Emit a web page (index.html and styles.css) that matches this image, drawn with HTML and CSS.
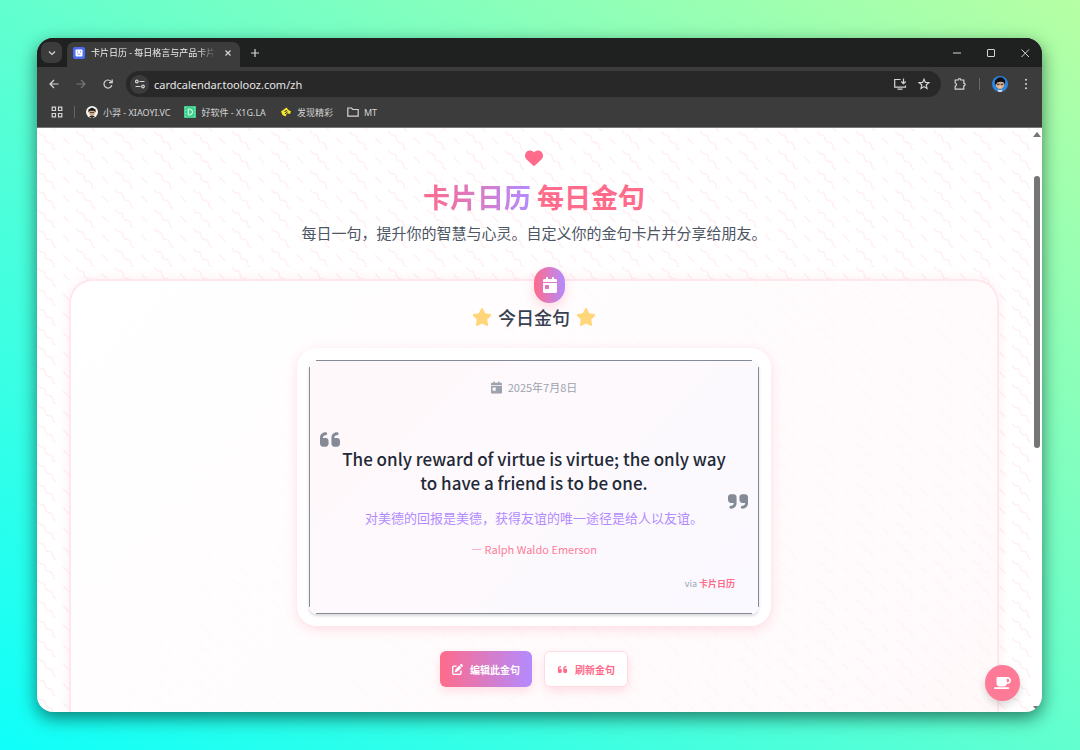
FILE: index.html
```html
<!DOCTYPE html>
<html lang="zh-CN">
<head>
<meta charset="utf-8">
<meta name="viewport" content="width=device-width, initial-scale=1">
<title>卡片日历 - 每日格言与产品卡片</title>
<link rel="stylesheet" href="styles.css">
</head>
<body>
<svg class="defs" aria-hidden="true">
  <symbol id="calendar" viewBox="0 0 448 512"><path d="M128 0c17.700 0 32 14.300 32 32V64H288V32c0-17.700 14.300-32 32-32s32 14.300 32 32V64h48c26.500 0 48 21.500 48 48v48H0V112C0 85.500 21.500 64 48 64H96V32c0-17.700 14.300-32 32-32zM0 192H448V464c0 26.500-21.500 48-48 48H48c-26.500 0-48-21.500-48-48V192zm80 64c-8.800 0-16 7.200-16 16v96c0 8.800 7.200 16 16 16h96c8.800 0 16-7.200 16-16V272c0-8.800-7.200-16-16-16H80z"/></symbol>
  <symbol id="star" viewBox="0 0 576 512"><path d="M316.900 18C311.600 7 300.400 0 288.100 0s-23.400 7-28.800 18L195 150.300 51.400 171.500c-12 1.800-22 10.200-25.700 21.700s-.7 24.200 7.900 32.700L137.800 329 113.200 474.700c-2 12 3 24.200 12.900 31.300s23 8 33.800 2.300l128.300-68.500 128.300 68.500c10.800 5.700 23.900 4.900 33.800-2.300s14.900-19.300 12.900-31.300L438.500 329 542.700 225.900c8.600-8.500 11.700-21.200 7.900-32.700s-13.700-19.900-25.700-21.700L381.200 150.300 316.900 18z"/></symbol>
  <symbol id="quote" viewBox="0 0 448 512"><path d="M0 216C0 149.700 53.700 96 120 96h8c17.700 0 32 14.300 32 32s-14.300 32-32 32h-8c-30.900 0-56 25.100-56 56v8h64c35.300 0 64 28.700 64 64v64c0 35.300-28.700 64-64 64H64c-35.300 0-64-28.700-64-64V216zm256 0c0-66.300 53.700-120 120-120h8c17.700 0 32 14.300 32 32s-14.300 32-32 32h-8c-30.900 0-56 25.100-56 56v8h64c35.300 0 64 28.700 64 64v64c0 35.300-28.700 64-64 64H320c-35.300 0-64-28.700-64-64V216z"/></symbol>
</svg>

<div class="window">
  <header class="chrome">
    <div class="tabs">
      <button class="tab-search" aria-label="搜索标签页"><svg class="i12" viewBox="0 0 12 12"><path class="line" d="M3 4.500l3 3 3-3"/></svg></button>
      <div class="tab">
        <svg class="i12" viewBox="0 0 12 12"><rect width="12" height="12" rx="2" fill="#4b6cf0"/><rect x="2.500" y="2.500" width="7" height="7" rx="1" fill="#fff"/><path d="M4.500 4v1.500M7.500 4v1.500M4.500 7.200h3" stroke="#8ba2f6"/></svg>
        <span class="tab-title">卡片日历 - 每日格言与产品卡片</span>
        <button class="icon-btn" aria-label="关闭标签页"><svg class="i12" viewBox="0 0 12 12"><path class="line" d="M3.500 3.500l5 5M8.500 3.500l-5 5"/></svg></button>
      </div>
      <button class="icon-btn new-tab" aria-label="新标签页"><svg class="i12" viewBox="0 0 12 12"><path class="line" d="M6 2v8M2 6h8"/></svg></button>
      <div class="win-controls">
        <button class="icon-btn" aria-label="最小化"><svg class="i12" viewBox="0 0 12 12"><path class="thin" d="M2 6h8"/></svg></button>
        <button class="icon-btn" aria-label="最大化"><svg class="i12" viewBox="0 0 12 12"><rect class="thin" x="2.500" y="2.500" width="7" height="7" rx=".5"/></svg></button>
        <button class="icon-btn" aria-label="关闭"><svg class="i12" viewBox="0 0 12 12"><path class="thin" d="M2.500 2.500l7.500 7.500M10 2.500L2.500 10"/></svg></button>
      </div>
    </div>

    <div class="toolbar">
      <div class="nav-buttons">
        <button class="icon-btn" aria-label="后退"><svg class="i12" viewBox="0 0 12 12"><path class="line" d="M10.500 6H2M6 2L2 6l4 4"/></svg></button>
        <button class="icon-btn dim" aria-label="前进"><svg class="i12" viewBox="0 0 12 12"><path class="line" d="M1.500 6H10M6 2l4 4-4 4"/></svg></button>
        <button class="icon-btn" aria-label="重新加载"><svg class="i12" viewBox="0 0 12 12"><path class="line" d="M9.800 7.200A4 4 0 1 1 9 3.400L10 4.500M10.200 1.500v3.200H7"/></svg></button>
      </div>
      <div class="omnibox">
        <button class="site-info" aria-label="网站信息"><svg class="i12" viewBox="0 0 12 12"><path class="line" d="M5.500 3.500h5M1.500 8.500h5"/><circle class="line" cx="2.800" cy="3.500" r="1.300"/><circle class="line" cx="9" cy="8.500" r="1.300"/></svg></button>
        <input class="url" type="text" aria-label="网址" value="cardcalendar.toolooz.com/zh">
        <button class="icon-btn" aria-label="安装应用"><svg class="i14" viewBox="0 0 14 14"><path class="line" d="M7.500 2.500H1.700v7.700h10.800V8.500M4.500 12.200h5M10.500 1.500v5M8.300 4.500l2.200 2.200 2.200-2.200"/></svg></button>
        <button class="icon-btn" aria-label="收藏"><svg class="i14" viewBox="0 0 14 14"><path class="line" d="M7 2.200l1.400 3.200 3.500.3-2.700 2.300.8 3.500L7 9.600l-3 1.900.8-3.500-2.700-2.300 3.500-.3z"/></svg></button>
      </div>
      <button class="icon-btn" aria-label="扩展程序"><svg class="i14" viewBox="0 0 14 14"><path class="line" d="M2.200 3h3a1.300 1.300 0 0 1 2.600 0h3v3.200a1.300 1.300 0 0 1 0 2.600v3.400H2.200V9.200c1.700-.4 1.700-2.800 0-3.200z"/></svg></button>
      <span class="divider"></span>
      <button class="icon-btn" aria-label="个人资料"><svg class="i16" viewBox="0 0 16 16"><circle cx="8" cy="8" r="8" fill="#2d84df"/><ellipse cx="8" cy="8.800" rx="4.200" ry="4.300" fill="#dca982"/><path d="M2.800 8.500L3 4.500 5.500 2 8 1.200l3 .6L13.200 4.500l-.2 4-1.400-2.300L9 5.800 5.500 6.200 4 8.500z" fill="#100f14"/><path d="M5 8.300h2.500M8.700 8.300h2.500" stroke="#24242c"/><path d="M6.300 10.800h3.400L8 11.800z" fill="#fff"/><path d="M5.500 13.400l2.500.8 2.500-.8L9.500 16h-3z" fill="#ddd"/></svg></button>
      <button class="icon-btn" aria-label="菜单"><svg class="i12" viewBox="0 0 12 12" fill="#d5d5d5"><circle cx="6" cy="1.700" r="1"/><circle cx="6" cy="6" r="1"/><circle cx="6" cy="10.300" r="1"/></svg></button>
    </div>

    <nav class="bookmarks">
      <button class="icon-btn" aria-label="所有应用"><svg class="i12" viewBox="0 0 12 12"><path class="line" d="M1.200 1.200h3.300v3.300H1.200zM7.500 1.200h3.300v3.300H7.500zM1.200 7.500h3.300v3.300H1.200zM7.500 7.500h3.300v3.300H7.500z"/></svg></button>
      <span class="divider"></span>
      <div class="links">
        <a href="#"><svg class="i12" viewBox="0 0 12 12"><circle cx="6" cy="6" r="6" fill="#f4f4f2"/><ellipse cx="6" cy="6.500" rx="3" ry="3.200" fill="#d9a982"/><path d="M2.300 6.500L2.500 3.500 6 1.500l3.500 2 .2 3L8 4.800H4z" fill="#151515"/><path d="M4 6.500h4" stroke="#333" stroke-width=".8"/><path d="M3 10.200l3-.8 3 .8-3 1.800z" fill="#222"/></svg>小羿 - XIAOYI.VC</a>
        <a href="#"><svg class="i12" viewBox="0 0 12 12"><rect width="12" height="12" rx="1" fill="#3fcf8e"/><path d="M4.200 3h1.300a3 3 0 0 1 0 6H4.200z" fill="none" stroke="#eafff4"/><path d="M1.500 1v10M10.500 1v10" fill="none" stroke="#a5ecc9" stroke-dasharray="1 2"/></svg>好软件 - X1G.LA</a>
        <a href="#"><svg class="i12" viewBox="0 0 12 12"><path d="M1 5.500L6.500 1.500l1.700 2.200L11 5.500 10 8 7 7.200 5.500 10.500 2.500 9z" fill="#f5e72a"/><path d="M4.500 5.500l2.500-1M5 7.800l2.500-1.800" stroke="#222"/></svg>发现精彩</a>
        <a href="#"><svg class="i12" viewBox="0 0 12 12"><path class="line" d="M.8 2h3.700l1.300 1.500h5.400v6.700H.8z"/></svg>MT</a>
      </div>
    </nav>
  </header>

  <div class="viewport">
    <main class="page">
      <div class="hero">
        <svg class="heart" viewBox="0 0 512 512"><path d="M47.600 300.400L228.300 469.100c7.500 7 17.400 10.900 27.700 10.900s20.200-3.900 27.700-10.900L464.400 300.400c30.400-28.300 47.600-68 47.600-109.500v-5.800c0-69.900-50.500-129.500-119.400-141C347 36.500 300.600 51.400 268 84L256 96 244 84c-32.600-32.600-79-47.500-124.600-39.900C50.500 55.600 0 115.200 0 185.100v5.800c0 41.500 17.200 81.200 47.600 109.500z"/></svg>
        <h1><span class="brand">卡片日历</span> 每日金句</h1>
        <p>每日一句，提升你的智慧与心灵。自定义你的金句卡片并分享给朋友。</p>
      </div>

      <section class="panel">
        <span class="badge"><svg viewBox="0 0 448 512"><use href="#calendar"/></svg></span>
        <h2><svg class="star" viewBox="0 0 576 512"><use href="#star"/></svg>今日金句<svg class="star" viewBox="0 0 576 512"><use href="#star"/></svg></h2>

        <div class="frame">
          <article class="card">
            <p class="date"><svg viewBox="0 0 448 512"><use href="#calendar"/></svg>2025年7月8日</p>
            <blockquote>
              <svg class="mark open" viewBox="0 0 448 512"><use href="#quote"/></svg>
              <p>The only reward of virtue is virtue; the only way to have a friend is to be one.</p>
              <svg class="mark close" viewBox="0 0 448 512"><use href="#quote"/></svg>
            </blockquote>
            <p class="translation">对美德的回报是美德，获得友谊的唯一途径是给人以友谊。</p>
            <p class="author">— Ralph Waldo Emerson</p>
            <p class="via">via <a href="#">卡片日历</a></p>
          </article>
        </div>

        <div class="actions">
          <button class="btn primary"><svg viewBox="0 0 512 512"><path d="M471.600 21.700c-21.900-21.900-57.300-21.900-79.200 0L362.300 51.700l97.900 97.900 30.100-30.100c21.900-21.900 21.900-57.300 0-79.200L471.600 21.700zm-299.200 220c-6.100 6.100-10.800 13.600-13.500 21.900l-29.600 88.800c-2.900 8.600-.6 18.100 5.800 24.600s15.900 8.700 24.600 5.800l88.800-29.600c8.200-2.700 15.700-7.400 21.900-13.500L437.700 172.300 339.700 74.300 172.400 241.700zM96 64C43 64 0 107 0 160V416c0 53 43 96 96 96H352c53 0 96-43 96-96V320c0-17.700-14.300-32-32-32s-32 14.300-32 32v96c0 17.700-14.300 32-32 32H96c-17.700 0-32-14.300-32-32V160c0-17.700 14.300-32 32-32h96c17.700 0 32-14.300 32-32s-14.300-32-32-32H96z"/></svg>编辑此金句</button>
          <button class="btn outline"><svg viewBox="0 0 448 512"><use href="#quote"/></svg>刷新金句</button>
        </div>
      </section>
    </main>
    <div class="scrollbar" aria-hidden="true"><span class="arrow up"></span><span class="thumb"></span><span class="arrow down"></span></div>
    <button class="coffee" aria-label="请我喝咖啡"><svg viewBox="0 0 640 512"><path d="M96 64c0-17.700 14.300-32 32-32H448h64c70.700 0 128 57.300 128 128s-57.300 128-128 128H480c0 53-43 96-96 96H192c-53 0-96-43-96-96V64zM480 224h32c35.300 0 64-28.700 64-64s-28.700-64-64-64H480V224zM32 416H544c17.700 0 32 14.300 32 32s-14.300 32-32 32H32c-17.700 0-32-14.300-32-32s14.300-32 32-32z"/></svg></button>
  </div>
</div>
</body>
</html>
```
FILE: styles.css
```css
* { box-sizing: border-box; }
body {
  margin: 0;
  min-height: 100vh;
  padding: 38px 38px 38px 37px;
  display: flex;
  background: linear-gradient(to top right, #0ffffa, #62ffcf 50%, #b6ffa3);
  font-family: "Noto Sans CJK SC", sans-serif;
}
h1, h2, p, blockquote { margin: 0; }
button { padding: 0; border: 0; background: none; font-family: inherit; cursor: pointer; }
a { color: inherit; text-decoration: none; }
svg { flex: none; display: block; fill: currentColor; }
.defs { position: absolute; width: 0; height: 0; }
.i12 { width: 12px; height: 12px; }
.i14 { width: 14px; height: 14px; }
.i16 { width: 16px; height: 16px; }
.line { fill: none; stroke: currentColor; stroke-width: 1.2; }
.thin { fill: none; stroke: currentColor; stroke-width: 1; }

.window {
  flex: 1;
  min-width: 0;
  display: flex;
  flex-direction: column;
  border-radius: 16px;
  overflow: hidden;
  background: #fff;
  box-shadow: 0 6px 18px rgba(0, 40, 30, .6);
}

/* browser frame */
.chrome { background: #3c3c3c; color: #d5d5d5; border-bottom: 1px solid #777; }
.tabs { display: flex; align-items: center; height: 29px; background: #1f2120; }
.tab-search {
  display: grid;
  place-items: center;
  width: 21px;
  height: 21px;
  margin: 0 5px 0 4px;
  border-radius: 7px;
  background: #3c3c3c;
  color: inherit;
}
.tab {
  display: flex;
  align-items: center;
  align-self: flex-end;
  gap: 6px;
  width: 173px;
  height: 25px;
  padding: 0 6px 4px;
  border-radius: 7px 7px 0 0;
  background: #3c3c3c;
}
.tab-title {
  flex: 1;
  overflow: hidden;
  white-space: nowrap;
  font-size: 9px;
  color: #eee;
  mask-image: linear-gradient(to right, #000 85%, transparent);
}
.icon-btn { display: grid; place-items: center; color: inherit; }
.new-tab { margin-left: 9px; }
.win-controls { display: flex; gap: 22px; margin-left: auto; padding-right: 11px; }
.toolbar { display: flex; align-items: center; height: 34px; padding: 0 10px 0 11px; gap: 12px; }
.nav-buttons { display: flex; gap: 15px; }
.dim { color: #777; }
.omnibox {
  flex: 1;
  display: flex;
  align-items: center;
  gap: 10px;
  height: 26px;
  padding: 0 10px 0 4px;
  border-radius: 13px;
  background: #282828;
}
.site-info { display: grid; place-items: center; width: 19px; height: 19px; border-radius: 50%; background: #3c3c3c; color: inherit; }
.url {
  flex: 1;
  min-width: 0;
  margin-left: -5px;
  padding: 0;
  border: 0;
  outline: 0;
  background: none;
  color: #e6e6e6;
  font: 11px "Noto Sans", sans-serif;
}
.divider { width: 1px; height: 12px; background: #666; }
.bookmarks { display: flex; align-items: center; gap: 11px; height: 26px; padding: 0 0 4px 14px; font: 9px "Noto Sans", "Noto Sans CJK SC", sans-serif; }
.links { display: flex; gap: 14px; }
.links a { display: flex; align-items: center; gap: 5px; }

/* page */
.viewport { position: relative; flex: 1; display: flex; min-height: 0; }
.page {
  flex: 1;
  padding: 21px 32px 0;
  display: flex;
  flex-direction: column;
  background: url("data:image/svg+xml,%3Csvg xmlns='http://www.w3.org/2000/svg' viewBox='0 0 52 26'%3E%3Cpath fill='%23ff6b8b' fill-opacity='.1' d='M10 10c0-2.210-1.790-4-4-4-3.314 0-6-2.686-6-6h2c0 2.210 1.790 4 4 4 3.314 0 6 2.686 6 6 0 2.210 1.790 4 4 4 3.314 0 6 2.686 6 6 0 2.210 1.790 4 4 4v2c-3.314 0-6-2.686-6-6 0-2.210-1.790-4-4-4-3.314 0-6-2.686-6-6zm25.464-1.950l8.486 8.486-1.414 1.414-8.486-8.486 1.414-1.414z'/%3E%3C/svg%3E") 0 3px / 39px auto;
}
.hero { display: flex; flex-direction: column; align-items: center; text-align: center; }
.heart { width: 18px; height: 18px; color: #ff6b8b; }
.hero h1 { margin-top: 12px; color: #ff6b8b; font-size: 27px; line-height: 36px; font-weight: 700; }
.brand { background: linear-gradient(to right, #ff6b8b, #b38bff); background-clip: text; color: transparent; }
.hero p { margin-top: 6px; color: #4b5563; font-size: 15px; line-height: 24px; }
.panel {
  position: relative;
  flex: 1;
  margin-top: 34px;
  padding-top: 23px;
  display: flex;
  flex-direction: column;
  align-items: center;
  border: 2px solid #ffe8ed;
  border-bottom: 0;
  border-radius: 24px 24px 0 0;
  background: linear-gradient(135deg, #fff, rgba(255, 245, 247, .6));
  box-shadow: 0 0 12px rgba(255, 107, 139, .12);
}
.badge {
  position: absolute;
  top: -14px;
  left: 50%;
  display: grid;
  place-items: center;
  width: 31px;
  height: 36px;
  border-radius: 16px;
  background: linear-gradient(to right, #ff6b8b, #b38bff);
  color: #fff;
  box-shadow: 0 4px 12px rgba(255, 107, 139, .25);
}
.badge svg { width: 14px; height: 16px; }
.panel h2 { display: flex; align-items: center; gap: 6px; color: #374151; font-size: 18px; line-height: 26px; font-weight: 500; }
.star { width: 20px; height: 18px; color: #ffd77a; }
.frame {
  width: 474px;
  max-width: 100%;
  margin-top: 18px;
  padding: 12px;
  border-radius: 20px;
  background: #fff;
  box-shadow: 0 3px 12px rgba(255, 107, 139, .22);
}
/* edge lines stop short of the rounded corners */
.card {
  --edge: linear-gradient(#858b96, #858b96);
  padding: 17px 13px 23px;
  border-radius: 8px;
  background:
    var(--edge) top / calc(100% - 14px) 1px no-repeat,
    var(--edge) bottom / calc(100% - 14px) 1px no-repeat,
    var(--edge) left / 1px calc(100% - 14px) no-repeat,
    var(--edge) right / 1px calc(100% - 14px) no-repeat,
    linear-gradient(135deg, #fff8fa, #fdf9fd 50%, #faf9ff);
  box-shadow: 0 2px 3px rgba(0, 0, 0, .15);
  text-align: center;
}
.date { display: flex; justify-content: center; align-items: center; gap: 6px; color: #9ca3af; font-size: 11px; line-height: 20px; }
.date svg { width: 11px; height: 13px; }
blockquote { position: relative; padding: 50px 12px 0; color: #1f2937; font-size: 17px; line-height: 24px; font-weight: 500; }
.mark { position: absolute; width: 20px; height: 23px; color: #858b96; }
.open { top: 31px; left: -2px; }
.close { right: -2px; bottom: -18px; transform: rotate(180deg); }
.translation { margin-top: 13px; color: #b38bff; font-size: 13px; line-height: 20px; }
.author { margin-top: 11px; color: #ff7d99; font-size: 11px; line-height: 20px; }
.via { margin-top: 18px; padding-right: 11px; color: #9ca3af; font-size: 9px; line-height: 14px; text-align: right; }
.via a { color: #ff6b8b; font-weight: 700; }
.actions { display: flex; gap: 12px; margin-top: 25px; }
.btn { display: flex; align-items: center; gap: 7px; height: 36px; padding: 0 12px; border-radius: 6px; font-size: 10px; font-weight: 700; box-shadow: 0 4px 10px rgba(255, 107, 139, .2); }
.btn svg { width: 11px; height: 11px; }
.primary { background: linear-gradient(to right, #ff6b8b, #b38bff); color: #fff; }
.outline { border: 1px solid #ffdce4; background: #fff; color: #ff6b8b; }
.coffee {
  position: absolute;
  right: 22px;
  bottom: 11px;
  display: grid;
  place-items: center;
  width: 35px;
  height: 36px;
  border-radius: 50%;
  background: #ff7a96;
  color: #fff;
  box-shadow: 0 4px 8px rgba(0, 0, 0, .15);
}
.coffee svg { width: 17px; height: 14px; }
.scrollbar { display: flex; flex-direction: column; align-items: center; width: 11px; padding: 4px 0 1px; }
.arrow { border: 4px solid transparent; }
.up { border-top: 0; border-bottom: 5px solid #757575; }
.down { margin-top: auto; border-bottom: 0; border-top: 5px solid #757575; }
.thumb { width: 6px; height: 47%; margin-top: 39px; border-radius: 3px; background: #757575; }
```
